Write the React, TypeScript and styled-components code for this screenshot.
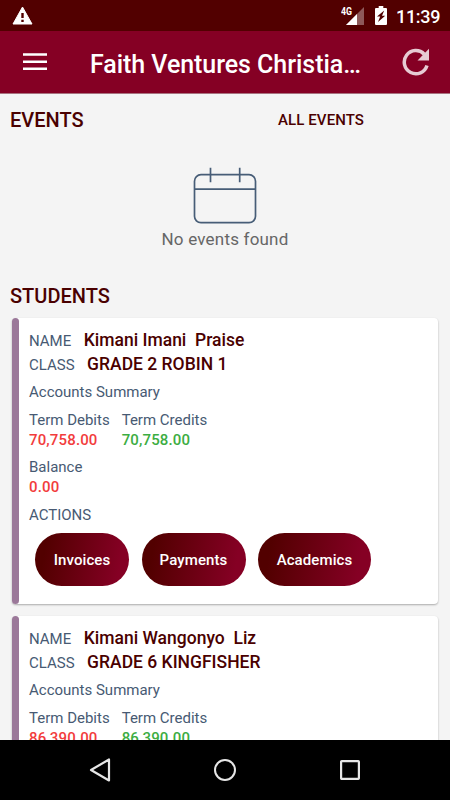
import React from "react";
import styled, { createGlobalStyle } from "styled-components";

const GlobalStyle = createGlobalStyle`
  * { box-sizing: border-box; }
  body { margin: 0; background: #f4f4f4; font-family: Roboto, "Noto Sans", sans-serif; }
`;

const Screen = styled.div`
  width: 450px;
  height: 800px;
  display: flex;
  flex-direction: column;
  overflow: hidden;
  background: #f4f4f4;
`;

const StatusBar = styled.div`
  flex: none;
  height: 31px;
  display: flex;
  align-items: center;
  padding: 0 10px 0 12px;
  background: #520000;
  svg { display: block; }
`;

const StatusIcons = styled.div`
  margin-left: auto;
  display: flex;
  align-items: center;
`;

const Clock = styled.span`
  width: 44px;
  margin-left: 9px;
  color: #fff;
  font-size: 18px;
  font-weight: 500;
  line-height: 22px;
  letter-spacing: -0.3px;
  white-space: nowrap;
  padding-top: 2px;
`;

const Header = styled.header`
  flex: none;
  height: 63px;
  display: flex;
  align-items: center;
  padding: 0 20px 0 23px;
  background: #850024;
  border-bottom: 1px solid #a8727f;
  svg { display: block; }
`;

const Title = styled.h1`
  flex: 1;
  margin: 5px 0 0 43px;
  color: #fff;
  font-size: 25px;
  font-weight: 500;
  line-height: 32px;
  letter-spacing: -0.05px;
  white-space: nowrap;
`;

const Content = styled.main`
  flex: 1;
  min-height: 0;
  overflow: hidden;
`;

const EventsHead = styled.div`
  display: grid;
  grid-template-columns: 268px 1fr;
  align-items: center;
  height: 52px;
  padding-left: 10px;
`;

const Heading = styled.h2`
  margin: 0;
  color: #4a0000;
  font-size: 20px;
  font-weight: 500;
  line-height: 24px;
`;

const AllEvents = styled.span`
  color: #4a0000;
  font-size: 15px;
  font-weight: 500;
  line-height: 20px;
  letter-spacing: 0.1px;
`;

const Empty = styled.div`
  display: flex;
  flex-direction: column;
  align-items: center;
  height: 138px;
  padding-top: 21px;
  svg { display: block; }
`;

const EmptyText = styled.span`
  margin-top: 3px;
  color: #666;
  font-size: 17px;
  line-height: 22px;
  letter-spacing: 0.2px;
`;

const StudentsHead = styled.div`
  height: 34px;
  padding-left: 10px;
`;

const Card = styled.article`
  display: flex;
  height: 286px;
  margin: 0 12px 12px;
  border-radius: 4px;
  background: #fff;
  box-shadow: 0 1px 2px rgba(0, 0, 0, 0.3);
`;

const Accent = styled.div`
  flex: none;
  width: 7px;
  border-radius: 4px;
  background: #9b7899;
`;

const CardBody = styled.div`
  flex: 1;
  padding: 10px 0 0 10px;
`;

const Line = styled.div`
  display: flex;
  align-items: baseline;
  height: 24px;
  line-height: 24px;
`;

const Label = styled.span<{ $gap?: number }>`
  margin-right: ${(p) => p.$gap ?? 0}px;
  color: #475a73;
  font-size: 15px;
  white-space: nowrap;
`;

const Value = styled.strong`
  color: #4a0000;
  font-size: 17.5px;
  font-weight: 500;
  white-space: pre;
`;

const Summary = styled.div<{ $top: number }>`
  margin-top: ${(p) => p.$top}px;
  line-height: 21px;
`;

const Figures = styled.div<{ $top: number }>`
  display: flex;
  gap: 12px;
  margin-top: ${(p) => p.$top}px;
`;

const Figure = styled.div`
  display: flex;
  flex-direction: column;
  line-height: 21px;
`;

const Amount = styled.span<{ $credit?: boolean }>`
  margin: -1px 0 1px;
  color: ${(p) => (p.$credit ? "#3cad42" : "#f23c3c")};
  font-size: 15px;
  font-weight: 500;
  line-height: 20px;
  letter-spacing: 0.15px;
`;

const Actions = styled.div`
  display: flex;
  gap: 12.5px;
  margin-top: 7px;
  padding-left: 6px;
`;

const Action = styled.button<{ $width: number }>`
  width: ${(p) => p.$width}px;
  height: 53px;
  padding: 1px 0 0;
  border: 0;
  border-radius: 27px;
  background: linear-gradient(100deg, #520000 12%, #850024 88%);
  color: #fff;
  font-family: inherit;
  font-size: 15px;
  font-weight: 500;
  letter-spacing: 0.1px;
`;

const NavBar = styled.nav`
  flex: none;
  height: 60px;
  display: grid;
  grid-template-columns: 125px 125px 125px;
  justify-content: center;
  place-items: center;
  background: #000;
  svg { display: block; }
`;

const WarningIcon = () => (
  <svg width="21" height="19" viewBox="0 0 21 19">
    <path d="M10.5 1 20 18H1Z" fill="#fff" stroke="#fff" strokeLinejoin="round" />
    <path d="M9.3 7h2.4v5H9.3zM9.3 13.7h2.4v2.2H9.3z" fill="#520000" />
  </svg>
);

const SignalIcon = () => (
  <svg width="24" height="20" viewBox="0 0 24 20">
    <path d="M23 1v18H5Z" fill="#fff" opacity=".35" />
    <path d="M16 8v11H5Z" fill="#fff" />
    <text x="0" y="9.3" fill="#fff" fontFamily="Roboto, sans-serif" fontSize="10" fontWeight="700" textLength="11" lengthAdjust="spacingAndGlyphs">4G</text>
  </svg>
);

const BatteryIcon = () => (
  <svg width="12" height="19" viewBox="0 0 12 19">
    <path d="M3.7 0h4.6v2H11q1 0 1 1v15q0 1-1 1H1q-1 0-1-1V3q0-1 1-1h2.7Z" fill="#fff" />
    <path d="M9.2 4.5 2 10.6h3.2L3 16l7.2-6.3H7Z" fill="#520000" />
  </svg>
);

const MenuIcon = () => (
  <svg width="24" height="18" viewBox="0 0 24 18">
    <path d="M0 1.5h24M0 8.7h24M0 15.7h24" stroke="#fff" strokeWidth="2.6" />
  </svg>
);

const RefreshIcon = () => (
  <svg width="28" height="28" viewBox="0 0 28 28">
    <path d="M22.3 6.2A11.6 11.6 0 1 0 25 17.5" fill="none" stroke="#e7cbd3" strokeWidth="3.5" />
    <path d="M27 .8v11.7H15.5Z" fill="#e7cbd3" />
  </svg>
);

const CalendarIcon = () => (
  <svg width="64" height="58" viewBox="0 0 64 58" fill="none" stroke="#475d77" strokeWidth="1.7">
    <rect x="1.5" y="7.7" width="61" height="48" rx="6.5" />
    <path d="M1.5 22.2h61M17.5.8v14.5M46.7.8v14.5" />
  </svg>
);

const students = [
  { name: "Kimani Imani  Praise", grade: "GRADE 2 ROBIN 1", amount: "70,758.00" },
  { name: "Kimani Wangonyo  Liz", grade: "GRADE 6 KINGFISHER", amount: "86,390.00" },
];

const actions = [
  { label: "Invoices", width: 94 },
  { label: "Payments", width: 104 },
  { label: "Academics", width: 113 },
];

export default function App() {
  return (
    <Screen>
      <GlobalStyle />
      <StatusBar>
        <WarningIcon />
        <StatusIcons>
          <SignalIcon />
          <svg width="10" height="1" />
          <BatteryIcon />
          <Clock>11:39</Clock>
        </StatusIcons>
      </StatusBar>
      <Header>
        <MenuIcon />
        <Title>Faith Ventures Christia…</Title>
        <RefreshIcon />
      </Header>
      <Content>
        <EventsHead>
          <Heading>EVENTS</Heading>
          <AllEvents>ALL EVENTS</AllEvents>
        </EventsHead>
        <Empty>
          <CalendarIcon />
          <EmptyText>No events found</EmptyText>
        </Empty>
        <StudentsHead>
          <Heading>STUDENTS</Heading>
        </StudentsHead>
        {students.map((s) => (
          <Card key={s.name}>
            <Accent />
            <CardBody>
              <Line>
                <Label $gap={12.5}>NAME</Label>
                <Value>{s.name}</Value>
              </Line>
              <Line>
                <Label $gap={12.5}>CLASS</Label>
                <Value>{s.grade}</Value>
              </Line>
              <Summary $top={5}>
                <Label>Accounts Summary</Label>
              </Summary>
              <Figures $top={7}>
                <Figure>
                  <Label>Term Debits</Label>
                  <Amount>{s.amount}</Amount>
                </Figure>
                <Figure>
                  <Label>Term Credits</Label>
                  <Amount $credit>{s.amount}</Amount>
                </Figure>
              </Figures>
              <Figures $top={6}>
                <Figure>
                  <Label>Balance</Label>
                  <Amount>0.00</Amount>
                </Figure>
              </Figures>
              <Summary $top={6}>
                <Label>ACTIONS</Label>
              </Summary>
              <Actions>
                {actions.map((a) => (
                  <Action key={a.label} $width={a.width}>{a.label}</Action>
                ))}
              </Actions>
            </CardBody>
          </Card>
        ))}
      </Content>
      <NavBar>
        <svg width="22" height="26" viewBox="0 0 22 26">
          <path d="M20 2.5v21L2 13Z" fill="none" stroke="#e6e6e6" strokeWidth="2.2" strokeLinejoin="round" />
        </svg>
        <svg width="24" height="24" viewBox="0 0 24 24">
          <circle cx="12" cy="12" r="10" fill="none" stroke="#e6e6e6" strokeWidth="2" />
        </svg>
        <svg width="20" height="20" viewBox="0 0 20 20">
          <rect x="1.1" y="1.1" width="17.8" height="17.8" rx=".6" fill="none" stroke="#e6e6e6" strokeWidth="2.2" />
        </svg>
      </NavBar>
    </Screen>
  );
}
